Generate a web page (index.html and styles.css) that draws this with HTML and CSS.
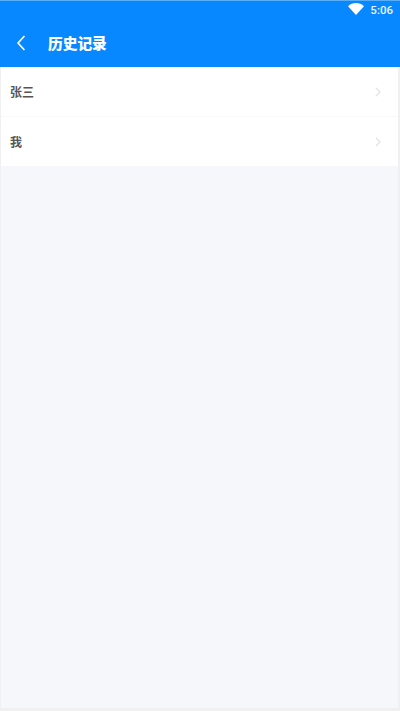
FILE: index.html
```html
<!DOCTYPE html>
<html lang="zh">
<head>
<meta charset="utf-8">
<title>历史记录</title>
<link rel="stylesheet" href="styles.css">
</head>
<body>
<div class="phone">
  <header class="appbar">
    <div class="status">
      <svg class="wifi" viewBox="0 0 16 12" aria-hidden="true"><path d="M0 3.200C2.200 1.200 5 0 8 0s5.800 1.200 8 3.200L8 12z"/></svg>
      <span class="time">5:06</span>
    </div>
    <div class="titlebar">
      <svg class="back" viewBox="0 0 10 16" aria-hidden="true"><path d="M8 1.500L2 8l6 6.500"/></svg>
      <h1 class="title">历史记录</h1>
    </div>
  </header>
  <ul class="list">
    <li class="row"><span class="name">张三</span><svg class="chev" viewBox="0 0 6 10" aria-hidden="true"><path d="M1 1l4 4-4 4"/></svg></li>
    <li class="row"><span class="name">我</span><svg class="chev" viewBox="0 0 6 10" aria-hidden="true"><path d="M1 1l4 4-4 4"/></svg></li>
  </ul>
  <main class="empty"></main>
</div>
</body>
</html>
```
FILE: styles.css
```css
* { box-sizing: border-box; }
html, body { margin: 0; height: 100%; background: #fff; }
body { font-family: "Noto Sans CJK SC", "Noto Sans", sans-serif; overflow: hidden; }
.phone {
  width: 400px;
  height: 711px;
  display: flex;
  flex-direction: column;
  padding: 0 2px 3px 1px;
  background: #f0f0f2;
}
.appbar {
  margin: 0 -2px 0 -1px;
  height: 67px;
  background: #0888ff;
  border-top: 1px solid #5aaef5;
  color: #fff;
  flex: none;
}
.status {
  height: 18px;
  display: flex;
  justify-content: flex-end;
  align-items: center;
  gap: 6px;
  padding-right: 7px;
}
.wifi { width: 16px; height: 12px; fill: #fff; margin-top: -3px; }
.time { font: 500 11.500px/18px Roboto, sans-serif; color: #eaf4ff; }
.titlebar { height: 48px; display: flex; align-items: center; padding-left: 16px; }
.back { width: 10px; height: 16px; fill: none; stroke: #fff; stroke-width: 1.700; stroke-linecap: round; stroke-linejoin: round; }
.title { margin: 0 0 0 22px; font-size: 14.700px; font-weight: 900; line-height: 20px; }
.list { margin: 0; padding: 0; list-style: none; background: #fff; flex: none; }
.row {
  height: 50px;
  display: flex;
  align-items: center;
  justify-content: space-between;
  padding: 0 17px 0 9px;
  border-bottom: 1px solid #f8f8f9;
}
.row:last-child { height: 49px; border-bottom: 0; }
.name { font-size: 12px; font-weight: 700; color: #555; }
.chev { width: 6px; height: 10px; fill: none; stroke: #e2e2e4; stroke-width: 1.200; }
.empty { flex: 1; background: #f5f7fb; }
```
